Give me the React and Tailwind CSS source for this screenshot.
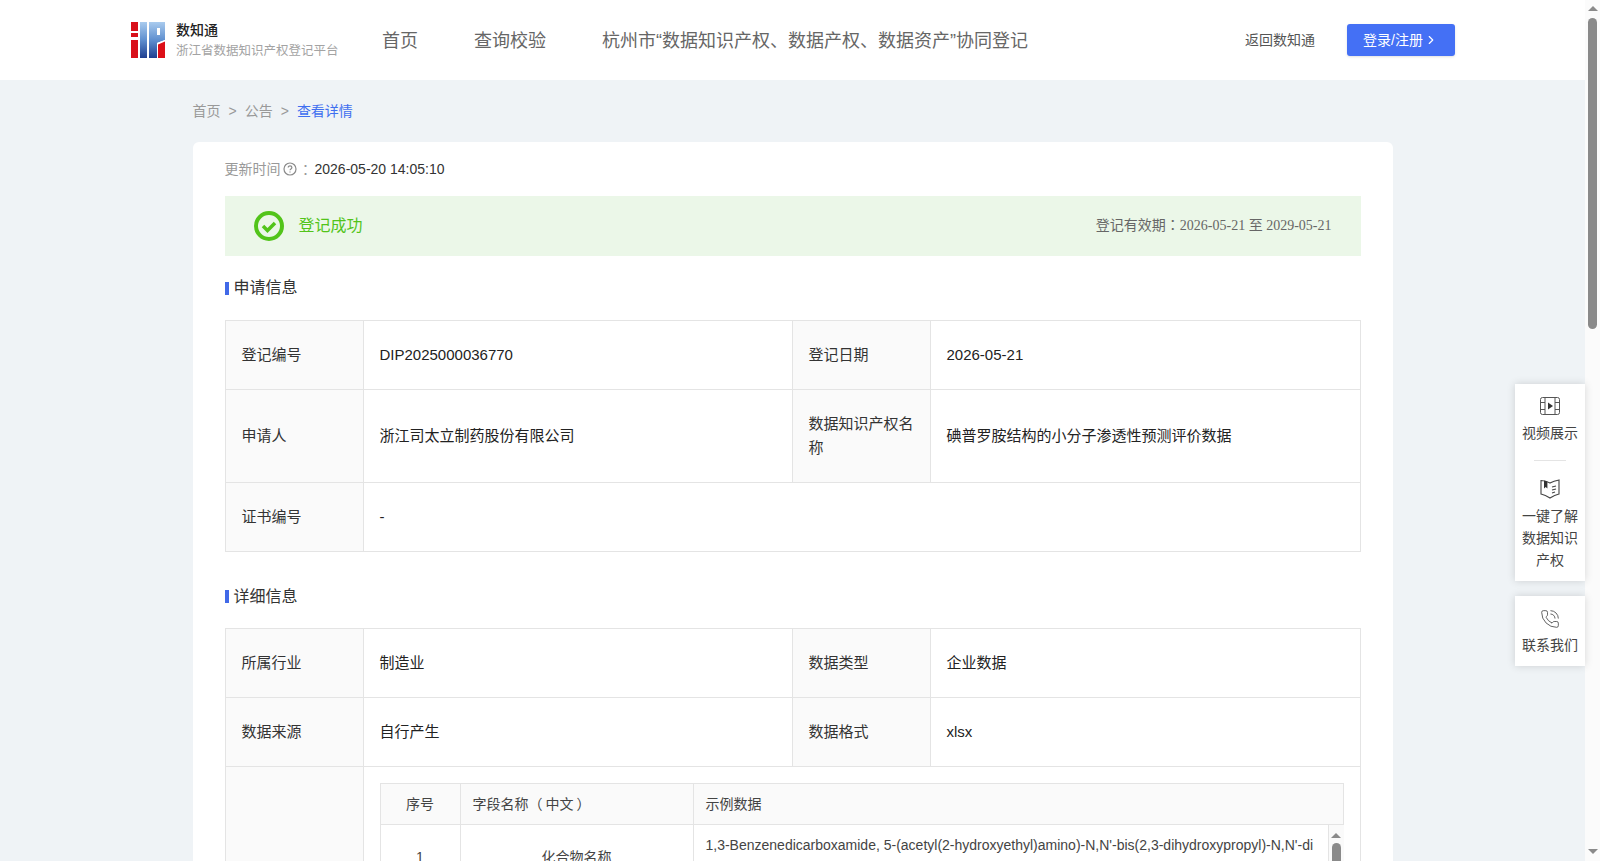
import React from "react";
import { ChevronRight, PhoneCall } from "lucide-react";

const FONT = "[font-family:'Liberation_Sans','Noto_Sans_CJK_SC',sans-serif]";

function Logo() {
  return (
    <svg width="34" height="36" viewBox="0 0 34 36" className="shrink-0">
      <defs>
        <linearGradient id="lg" x1="0" y1="0" x2="0" y2="1">
          <stop offset="0" stopColor="#a9cbee" />
          <stop offset="0.5" stopColor="#5f8fcf" />
          <stop offset="1" stopColor="#1f3f90" />
        </linearGradient>
      </defs>
      <path d="M0 0h7v9H0zM0 11h7v4H0zM0 18h7v18H0z" fill="#d9101a" />
      <rect x="9" y="0" width="7" height="36" fill="url(#lg)" />
      <path d="M18 0h16v18l-8 3v15h-8z" fill="url(#lg)" />
      <path d="M26 6h3v7h-3z" fill="#fff" />
      <path d="M26 21l8-3v18h-8z" fill="#fff" />
      <path d="M27 22.5l7-3V36h-7z" fill="#dc0f18" />
    </svg>
  );
}

function SectionTitle({ children, textClass }) {
  return (
    <div className="flex items-center gap-[5px] h-6 text-base text-[#333]">
      <span className="w-1 h-[13px] bg-[#4169e8]" />
      <span className={textClass}>{children}</span>
    </div>
  );
}

function Th({ children, ...p }) {
  return (
    <td {...p} className="border border-[#e4e4e4] bg-[#fafafa] px-4 py-0 font-normal text-[#333] leading-6 align-middle">
      {children}
    </td>
  );
}
function Td({ children, ...p }) {
  return (
    <td {...p} className="border border-[#e4e4e4] bg-white px-4 py-0 text-[#222] leading-6 align-middle">
      {children}
    </td>
  );
}
function Cols() {
  return (
    <colgroup>
      <col className="w-[138px]" />
      <col className="w-[429px]" />
      <col className="w-[138px]" />
      <col />
    </colgroup>
  );
}

function FilmIcon() {
  return (
    <svg width="20" height="20" viewBox="0 0 20 20" fill="none" stroke="#555" strokeWidth="1">
      <rect x="0.5" y="1.5" width="19" height="17" rx="2" />
      <path d="M5 1.5v17M15 1.5v17M0.5 6.5H5M0.5 13.5H5M15 6.5h4.5M15 13.5h4.5" />
      <path d="M8 6.5l5 3.500-5 3.500z" fill="#333" stroke="none" />
    </svg>
  );
}
function BookIcon() {
  return (
    <svg width="20" height="20" viewBox="0 0 20 20" fill="none" stroke="#444" strokeWidth="1.1">
      <path d="M1 1.500c3 0 6 .8 9 2.500 3-1.700 6-2.500 9-3v14c-3 .6-6 2-9 4-3-2-6-3.400-9-4z" />
      <path d="M4 1.500v8l1.700-1.500L7.400 9.500V2.500" fill="#333" stroke="none" />
      <path d="M12 8l4-1M12 11l4-1M12 14l3-1" />
    </svg>
  );
}

export default function App() {
  return (
    <div className={`${FONT} relative flex h-[861px] w-full overflow-hidden bg-[#eff3f6] text-[15px]`}>
      <div className="flex-1 min-w-0">
        {/* header */}
        <header className="flex items-center justify-between h-20 bg-white pl-[131px] pr-[130px]">
          <div className="flex items-center">
            <Logo />
            <div className="ml-[11px] w-[172px]">
              <div className="text-sm leading-[20px] mb-[2px] font-medium text-[#222]">数知通</div>
              <div className="text-[12.5px] leading-[18px] text-[#a3a3a3] whitespace-nowrap">浙江省数据知识产权登记平台</div>
            </div>
            <nav className="ml-[34px] mt-[2px] flex gap-14 text-lg text-[#666] whitespace-nowrap">
              <span>首页</span>
              <span>查询校验</span>
              <span>杭州市“数据知识产权、数据产权、数据资产”协同登记</span>
            </nav>
          </div>
          <div className="flex items-center">
            <span className="text-sm text-[#555] mr-[32px]">返回数知通</span>
            <button className="flex items-center w-[108px] h-8 pl-4 rounded-[3px] bg-[#4470f5] text-sm text-white shadow-sm">
              登录/注册
              <ChevronRight size={14} className="ml-px" />
            </button>
          </div>
        </header>

        {/* breadcrumb */}
        <div className="w-[1200px] mx-auto">
          <div className="flex items-center h-[62px] text-sm text-[#999]">
            <span>首页</span>
            <span className="mx-2">&gt;</span>
            <span>公告</span>
            <span className="mx-2">&gt;</span>
            <span className="text-[#3f6ff0]">查看详情</span>
          </div>

          {/* card */}
          <main className="bg-white rounded-md px-8 pb-8">
            <div className="flex items-center h-[54px] text-sm">
              <span className="text-[#999]">更新时间</span>
              <svg width="14" height="14" viewBox="0 0 14 14" fill="none" stroke="#8a8a8a" strokeWidth="1.2" className="ml-[2px]">
                <circle cx="7" cy="7" r="6" />
                <path d="M5.200 5.600c0-2.300 3.700-2.300 3.700 0 0 1.300-1.900 1.300-1.900 2.700" />
                <path d="M7 9.600v1" />
              </svg>
              <span className="text-[#999] mx-[2px] [font-family:'Noto_Sans_CJK_JP',sans-serif]">：</span>
              <span className="text-[#333]">2026-05-20 14:05:10</span>
            </div>

            <div className="flex items-center justify-between h-[60px] bg-[#ebf7e8] pl-7 pr-[29px]">
              <div className="flex items-center text-base text-[#52c41a]">
                <svg width="30" height="30" viewBox="0 0 30 30" fill="none" stroke="#52c41a" strokeWidth="4" className="ml-px">
                  <circle cx="15" cy="15" r="13" />
                  <path d="M9 15l4.500 4.500 7.500-7.500" strokeWidth="3.500" />
                </svg>
                <span className="ml-[15px]">登记成功</span>
              </div>
              <div className="mb-[2px] text-sm text-[#666] [font-family:'Liberation_Serif','Noto_Sans_CJK_SC',serif]">
                登记有效期<span className="[font-family:'Noto_Sans_CJK_JP',serif]">：</span>2026-05-21 至 2029-05-21
              </div>
            </div>

            <div className="mt-5">
              <SectionTitle>申请信息</SectionTitle>
            </div>
            <table className="mt-[20px] w-[1136px] table-fixed border-collapse">
              <Cols />
              <tbody>
                <tr className="h-[69px]">
                  <Th>登记编号</Th>
                  <Td>DIP2025000036770</Td>
                  <Th>登记日期</Th>
                  <Td>2026-05-21</Td>
                </tr>
                <tr className="h-[93px]">
                  <Th>申请人</Th>
                  <Td>浙江司太立制药股份有限公司</Td>
                  <Th>数据知识产权名称</Th>
                  <Td>碘普罗胺结构的小分子渗透性预测评价数据</Td>
                </tr>
                <tr className="h-[69px]">
                  <Th>证书编号</Th>
                  <Td colSpan={3}>-</Td>
                </tr>
              </tbody>
            </table>

            <div className="mt-[32px]">
              <SectionTitle textClass="mt-[2px]">详细信息</SectionTitle>
            </div>
            <table className="mt-[20px] w-[1136px] table-fixed border-collapse">
              <Cols />
              <tbody>
                <tr className="h-[69px]">
                  <Th>所属行业</Th>
                  <Td>制造业</Td>
                  <Th>数据类型</Th>
                  <Td>企业数据</Td>
                </tr>
                <tr className="h-[69px]">
                  <Th>数据来源</Th>
                  <Td>自行产生</Td>
                  <Th>数据格式</Th>
                  <Td>xlsx</Td>
                </tr>
                <tr>
                  <Th />
                  <td colSpan={3} className="border border-[#e4e4e4] p-4">
                    <div className="w-[964px] text-sm text-[#444]">
                      <div className="grid grid-cols-[80px_233px_1fr] h-[42px] bg-[#fafafa] border border-[#e4e4e4] items-stretch">
                        <div className="flex items-center justify-center border-r border-[#e4e4e4]">序号</div>
                        <div className="flex items-center pl-3 border-r border-[#e4e4e4]">字段名称（<span className="px-[3px]">中文</span>）</div>
                        <div className="flex items-center pl-3">示例数据</div>
                      </div>
                      <div className="flex border-l border-b border-[#e4e4e4]">
                        <div className="flex-1 grid grid-cols-[80px_233px_1fr]">
                          <div className="flex items-center justify-center border-r border-[#e4e4e4]">1</div>
                          <div className="flex items-center justify-center border-r border-[#e4e4e4]">化合物名称</div>
                          <div className="px-3 py-2 leading-6 break-all">
                            1,3-Benzenedicarboxamide, 5-(acetyl(2-hydroxyethyl)amino)-N,N'-bis(2,3-dihydroxypropyl)-N,N'-dimethyl-2,4,6-triiodo
                          </div>
                        </div>
                        <div className="flex w-[16px] shrink-0 flex-col items-center bg-[#fafafa] border-l border-[#e4e4e4]">
                          <span className="mt-[8px] w-0 h-0 border-x-[5px] border-b-[5px] border-x-transparent border-b-[#8a8a8a]" />
                          <span className="mt-[5px] w-[9px] h-[40px] rounded-t-[5px] bg-[#8a8a8a]" />
                        </div>
                      </div>
                    </div>
                  </td>
                </tr>
              </tbody>
            </table>
          </main>
        </div>
      </div>

      {/* page scrollbar */}
      <div className="flex w-[15px] shrink-0 flex-col items-center bg-[#fbfbfb]">
        <span className="mt-[6px] w-0 h-0 border-x-[5px] border-b-[5px] border-x-transparent border-b-[#8a8a8a]" />
        <span className="mt-[7px] w-[9px] h-[311px] rounded-[5px] bg-[#8a8a8a]" />
        <span className="mt-auto mb-[7px] w-0 h-0 border-x-[5px] border-t-[5px] border-x-transparent border-t-[#8a8a8a]" />
      </div>

      {/* floating side tools */}
      <aside className="absolute right-[15px] top-[384px] w-[70px] flex flex-col gap-[15px] text-sm text-[#444] text-center leading-[22px]">
        <div className="bg-white shadow-[0_0_8px_rgba(0,0,0,0.15)] flex flex-col items-center px-[7px] pt-3 pb-[10px]">
          <FilmIcon />
          <div className="mt-[6px]">视频展示</div>
          <div className="mt-[16px] w-8 h-px bg-[#e4e4e4]" />
          <div className="mt-[18px]"><BookIcon /></div>
          <div className="mt-[6px]">一键了解数据知识产权</div>
        </div>
        <div className="bg-white shadow-[0_0_8px_rgba(0,0,0,0.15)] flex flex-col items-center px-[7px] h-[70px] pt-[13px]">
          <PhoneCall size={20} strokeWidth={1} color="#444" />
          <div className="mt-[5px]">联系我们</div>
        </div>
      </aside>
    </div>
  );
}
